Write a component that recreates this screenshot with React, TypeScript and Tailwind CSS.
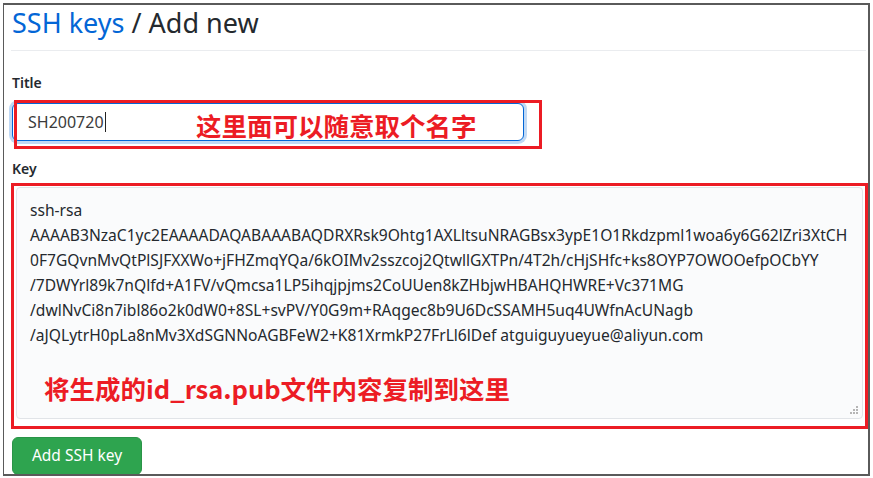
import React from "react";

const keyLines = [
  "ssh-rsa",
  "AAAAB3NzaC1yc2EAAAADAQABAAABAQDRXRsk9Ohtg1AXLltsuNRAGBsx3ypE1O1Rkdzpml1woa6y6G62lZri3XtCH",
  "0F7GQvnMvQtPlSJFXXWo+jFHZmqYQa/6kOIMv2sszcoj2QtwllGXTPn/4T2h/cHjSHfc+ks8OYP7OWOOefpOCbYY",
  "/7DWYrl89k7nQlfd+A1FV/vQmcsa1LP5ihqjpjms2CoUUen8kZHbjwHBAHQHWRE+Vc371MG",
  "/dwlNvCi8n7ibl86o2k0dW0+8SL+svPV/Y0G9m+RAqgec8b9U6DcSSAMH5uq4UWfnAcUNagb",
  "/aJQLytrH0pLa8nMv3XdSGNNoAGBFeW2+K81XrmkP27FrLl6lDef atguiguyueyue@aliyun.com",
];

const Grip = () => (
  <svg width="10" height="10" viewBox="0 0 10 10" className="absolute right-[3px] bottom-[3px]">
    <rect x="7" y="1" width="2" height="2" fill="#b5b5b5" />
    <rect x="4" y="4" width="2" height="2" fill="#b5b5b5" />
    <rect x="7" y="4" width="2" height="2" fill="#b5b5b5" />
    <rect x="1" y="7" width="2" height="2" fill="#b5b5b5" />
    <rect x="4" y="7" width="2" height="2" fill="#b5b5b5" />
    <rect x="7" y="7" width="2" height="2" fill="#b5b5b5" />
  </svg>
);

const App = () => {
  return (
    <div className="w-[873px] h-[478px] bg-white pt-[3px] pl-[3px] overflow-hidden">
      <div
        className="w-[867px] h-[473px] border-l border-t-2 border-r-2 border-b-2 border-[#5a5a5a] overflow-hidden flex flex-col pl-[7px] pr-[2px]"
        style={{ fontFamily: '"Noto Sans", "Noto Sans CJK SC", sans-serif' }}
      >
        {/* header */}
        <h1 className="h-[46px] shrink-0 border-b border-[#eaecef] text-[27px] leading-[32px] pt-[2px] pl-[1px] font-normal text-[#24292e] whitespace-nowrap">
          <span className="text-[#0366d6]">SSH keys</span> / Add new
        </h1>

        <label className="mt-[22px] text-[14px] leading-[20px] font-semibold text-[#24292e] pl-[1px]">
          Title
        </label>

        <div className="relative mt-[10px] h-[38px] w-[512px] ml-[1px] shrink-0">
          <div className="h-full w-full rounded-[6px] border border-[#0366d6] shadow-[0_0_0_3px_rgba(3,102,214,0.25)] bg-white flex items-center pl-[15px] text-[16px] text-[#3b3b3b]">
            SH200720
            <span className="inline-block w-[1px] h-[20px] bg-[#222] ml-[1px]" />
          </div>
          <div className="absolute left-[2px] -top-[3px] w-[528px] h-[49px] border-[3px] border-[#ec1c24] flex items-center pl-[179px]">
            <span
              className="text-[25.5px] font-bold text-[#ec1c24] leading-none"
              style={{ fontFamily: '"Noto Sans CJK SC", sans-serif' }}
            >
              这里面可以随意取个名字
            </span>
          </div>
        </div>

        <label className="mt-[18px] text-[14px] leading-[20px] font-semibold text-[#24292e] pl-[1px]">
          Key
        </label>

        <div className="mt-[4px] w-[857px] h-[246px] shrink-0 border-[3px] border-[#ec1c24] pl-[2px] pt-[1px] pr-[2px]">
          <div className="relative h-[232px] bg-[#fafbfc] border border-[#e1e4e8] rounded-[4px] pl-[13px] pt-[10px] text-[15.6px] leading-[25px] text-[#24292e]">
            {keyLines.map((l, i) => (
              <div key={i} className="whitespace-nowrap">
                {l}
              </div>
            ))}
            <div
              className="mt-[25px] pl-[14px] text-[25.5px] font-bold text-[#ec1c24] leading-[30px] whitespace-nowrap"
              style={{ fontFamily: '"Noto Sans CJK SC", sans-serif' }}
            >
              将生成的id_rsa.pub文件内容复制到这里
            </div>
            <Grip />
          </div>
        </div>

        <button
          type="button"
          className="mt-[8px] ml-[1px] w-[130px] h-[38px] shrink-0 rounded-[6px] bg-[#2ea44f] border border-[#2a9447] text-white text-[15.5px] flex items-center justify-center"
        >
          Add SSH key
        </button>
      </div>
    </div>
  );
};

export default App;
